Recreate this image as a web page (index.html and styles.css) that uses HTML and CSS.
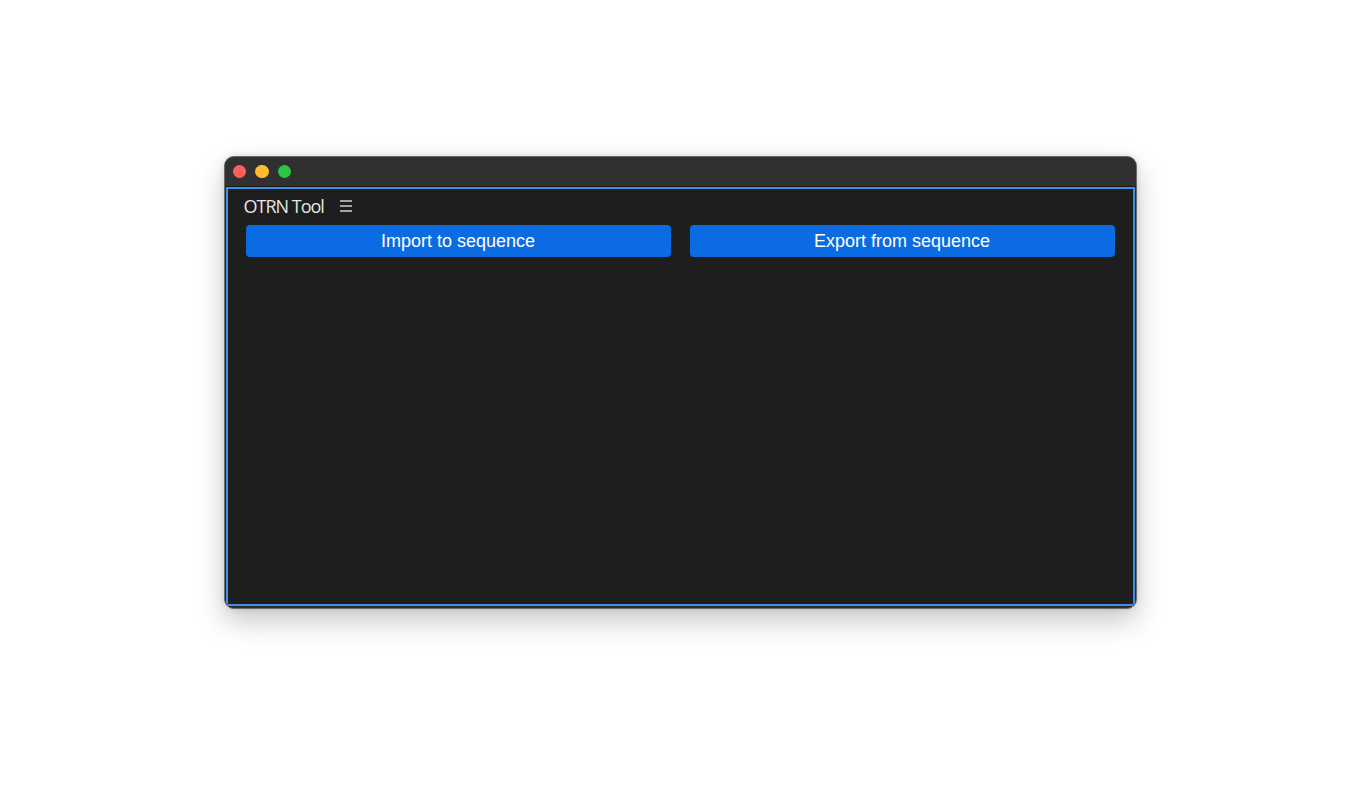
FILE: index.html
```html
<!DOCTYPE html>
<html>
<head>
<meta charset="utf-8">
<link rel="stylesheet" href="styles.css">
</head>
<body>
<div class="stage">
  <div class="window">
    <div class="titlebar">
      <span class="light red"></span>
      <span class="light yellow"></span>
      <span class="light green"></span>
    </div>
    <div class="content">
      <div class="header">
        <span class="title">OTRN Tool</span>
        <svg class="menu" width="14" height="12" viewBox="0 0 14 12">
          <path d="M1 1h12M1 6h12M1 11h12" stroke="#d0d0d0" stroke-width="1.5" fill="none"/>
        </svg>
      </div>
      <div class="actions">
        <button class="btn">Import to sequence</button>
        <button class="btn">Export from sequence</button>
      </div>
    </div>
  </div>
</div>
</body>
</html>
```

FILE: styles.css
```css
html, body {
  margin: 0;
  padding: 0;
  background: #ffffff;
}

.stage {
  width: 1360px;
  height: 800px;
  display: flex;
  flex-direction: column;
  align-items: center;
  padding-top: 156px;
  box-sizing: border-box;
}

.window {
  width: 913px;
  height: 453px;
  box-sizing: border-box;
  border: 1px solid #6a6a6a;
  border-radius: 10px;
  background: #2b2b2b;
  box-shadow: 0 12px 28px rgba(0, 0, 0, 0.22), 0 0 6px rgba(0, 0, 0, 0.12);
  display: flex;
  flex-direction: column;
  overflow: hidden;
  padding: 0 1px 2px 1px;
}

.titlebar {
  height: 29px;
  flex: 0 0 29px;
  background: #313030;
  display: flex;
  align-items: center;
  gap: 9px;
  padding-left: 8px;
  margin: 0 -1px;
  border-bottom: 1px solid #1a1a1a;
}

.light {
  width: 13.5px;
  height: 13.5px;
  border-radius: 50%;
  display: block;
}
.red { background: #fe5f57; }
.yellow { background: #febc2e; }
.green { background: #28c840; }

.content {
  flex: 1;
  background: #1e1e1e;
  border: 2px solid #3f8ee8;
  display: flex;
  flex-direction: column;
}

.header {
  height: 36px;
  box-sizing: border-box;
  padding-bottom: 3px;
  display: flex;
  align-items: center;
  padding-left: 16px;
  gap: 15px;
}

.title {
  font-family: "Open Sans", "Noto Sans", sans-serif;
  font-size: 18px;
  letter-spacing: -1px;
  color: #e6e6e6;
}

.menu {
  display: block;
  margin-top: 1px;
}

.actions {
  display: grid;
  grid-template-columns: 1fr 1fr;
  gap: 19px;
  padding: 0 18px;
}

.btn {
  height: 32px;
  border: none;
  border-radius: 4px;
  background: #0b6be3;
  color: #ffffff;
  font-family: "Liberation Sans", Arial, sans-serif;
  font-size: 18px;
  padding: 0;
}
```
